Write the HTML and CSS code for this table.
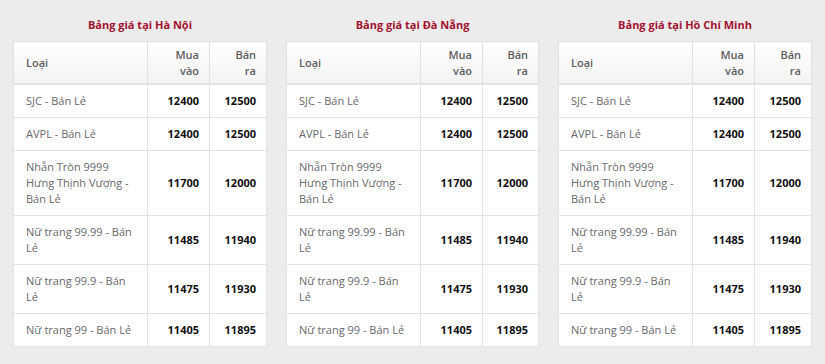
FILE: index.html
```html
<!DOCTYPE html>
<html lang="vi">
<head>
<meta charset="utf-8">
<title>Bảng giá vàng</title>
<link rel="stylesheet" href="styles.css">
</head>
<body>
<div class="page">
  <section class="block">
    <h3 class="title">Bảng giá tại Hà Nội</h3>
    <table class="prices">
      <colgroup><col class="c-type"><col class="c-buy"><col class="c-sell"></colgroup>
      <thead><tr><th class="left">Loại</th><th>Mua vào</th><th>Bán ra</th></tr></thead>
      <tbody>
        <tr><td class="name">SJC - Bán Lẻ</td><td class="num">12400</td><td class="num">12500</td></tr>
        <tr><td class="name">AVPL - Bán Lẻ</td><td class="num">12400</td><td class="num">12500</td></tr>
        <tr><td class="name">Nhẫn Tròn 9999 Hưng Thịnh Vượng - Bán Lẻ</td><td class="num">11700</td><td class="num">12000</td></tr>
        <tr><td class="name">Nữ trang 99.99 - Bán Lẻ</td><td class="num">11485</td><td class="num">11940</td></tr>
        <tr><td class="name">Nữ trang 99.9 - Bán Lẻ</td><td class="num">11475</td><td class="num">11930</td></tr>
        <tr><td class="name">Nữ trang 99 - Bán Lẻ</td><td class="num">11405</td><td class="num">11895</td></tr>
      </tbody>
    </table>
  </section>
  <section class="block">
    <h3 class="title">Bảng giá tại Đà Nẵng</h3>
    <table class="prices">
      <colgroup><col class="c-type"><col class="c-buy"><col class="c-sell"></colgroup>
      <thead><tr><th class="left">Loại</th><th>Mua vào</th><th>Bán ra</th></tr></thead>
      <tbody>
        <tr><td class="name">SJC - Bán Lẻ</td><td class="num">12400</td><td class="num">12500</td></tr>
        <tr><td class="name">AVPL - Bán Lẻ</td><td class="num">12400</td><td class="num">12500</td></tr>
        <tr><td class="name">Nhẫn Tròn 9999 Hưng Thịnh Vượng - Bán Lẻ</td><td class="num">11700</td><td class="num">12000</td></tr>
        <tr><td class="name">Nữ trang 99.99 - Bán Lẻ</td><td class="num">11485</td><td class="num">11940</td></tr>
        <tr><td class="name">Nữ trang 99.9 - Bán Lẻ</td><td class="num">11475</td><td class="num">11930</td></tr>
        <tr><td class="name">Nữ trang 99 - Bán Lẻ</td><td class="num">11405</td><td class="num">11895</td></tr>
      </tbody>
    </table>
  </section>
  <section class="block">
    <h3 class="title">Bảng giá tại Hồ Chí Minh</h3>
    <table class="prices">
      <colgroup><col class="c-type"><col class="c-buy"><col class="c-sell"></colgroup>
      <thead><tr><th class="left">Loại</th><th>Mua vào</th><th>Bán ra</th></tr></thead>
      <tbody>
        <tr><td class="name">SJC - Bán Lẻ</td><td class="num">12400</td><td class="num">12500</td></tr>
        <tr><td class="name">AVPL - Bán Lẻ</td><td class="num">12400</td><td class="num">12500</td></tr>
        <tr><td class="name">Nhẫn Tròn 9999 Hưng Thịnh Vượng - Bán Lẻ</td><td class="num">11700</td><td class="num">12000</td></tr>
        <tr><td class="name">Nữ trang 99.99 - Bán Lẻ</td><td class="num">11485</td><td class="num">11940</td></tr>
        <tr><td class="name">Nữ trang 99.9 - Bán Lẻ</td><td class="num">11475</td><td class="num">11930</td></tr>
        <tr><td class="name">Nữ trang 99 - Bán Lẻ</td><td class="num">11405</td><td class="num">11895</td></tr>
      </tbody>
    </table>
  </section>
</div>
</body>
</html>
```
FILE: styles.css
```css
html, body {
  margin: 0;
  padding: 0;
  background: #ececec;
}
body {
  font-family: "Open Sans", "Noto Sans", sans-serif;
  font-size: 11px;
  color: #333;
}
.page {
  display: grid;
  grid-template-columns: 254px 253px 254px;
  column-gap: 19px;
  padding: 17px 13px 0 13px;
}
.block {
  display: flex;
  flex-direction: column;
}
.title {
  margin: 0 0 8px 0;
  height: 16px;
  line-height: 16px;
  text-align: center;
  font-size: 11px;
  font-weight: 700;
  color: #a3122e;
}
.prices {
  width: 100%;
  border-collapse: collapse;
  table-layout: fixed;
  background: #fff;
  border: 1px solid #dedede;
  box-shadow: 0 1px 1px rgba(0,0,0,0.04);
}
.c-type { width: 134px; }
.c-buy { width: 62px; }
.c-sell { width: auto; }
.prices th {
  padding: 5px 10px 4px 16px;
  line-height: 16px;
  text-align: right;
  font-weight: 600;
  color: #5f5f5f;
  background: linear-gradient(#ffffff, #f3f3f3);
  border: 1px solid #e0e0e0;
  border-bottom: 2px solid #e3e3e3;
  height: 32px;
  box-sizing: content-box;
  vertical-align: middle;
}
.prices th.left {
  text-align: left;
  padding-left: 12px;
}
.prices td {
  padding: 8px 10px 8px 10px;
  line-height: 16px;
  border: 1px solid #e3e3e3;
  vertical-align: middle;
}
.prices td.name {
  padding-left: 12px;
  padding-right: 10px;
  color: #6a6a6a;
}
.prices td.num {
  text-align: right;
  font-weight: 700;
  color: #111;
}
```
